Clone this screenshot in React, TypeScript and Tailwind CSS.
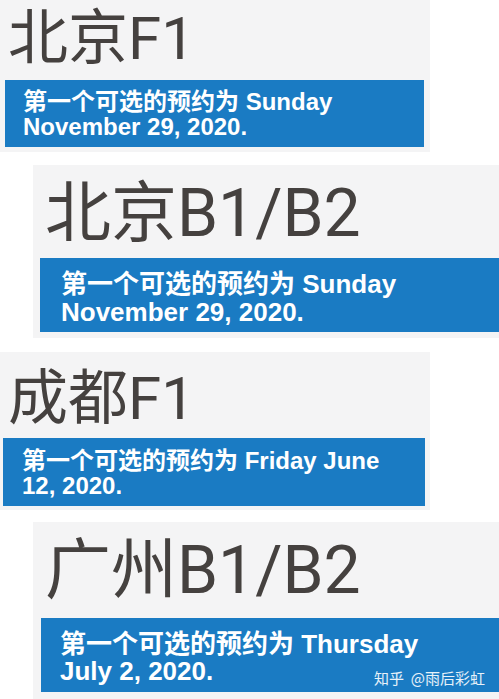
import React from 'react';

type Slot = {
    title: string;
    lines: [string, string];
    card: string;
    heading: string;
    banner: string;
};

// each screenshot crop is a bit off, so spacing lives per card
const slots: Slot[] = [
    {
        title: '北京F1',
        lines: ['第一个可选的预约为 Sunday', 'November 29, 2020.'],
        card: 'w-[430px] h-[152px] pt-[9px]',
        heading: 'ml-[8px] text-[60px]',
        banner: 'ml-[5px] w-[419px] mt-[11px] pl-[18px] pt-[9px] pb-[8px] text-[24px] leading-[25px]',
    },
    {
        title: '北京B1/B2',
        lines: ['第一个可选的预约为 Sunday', 'November 29, 2020.'],
        card: 'ml-[33px] mt-[13px] h-[173px] pt-[16px]',
        heading: 'ml-[12px] text-[66px]',
        banner: 'ml-[7px] mt-[11px] pl-[21px] pt-[12px] pb-[6px] text-[26px] leading-[28px]',
    },
    {
        title: '成都F1',
        lines: ['第一个可选的预约为 Friday June', '12, 2020.'],
        card: 'w-[430px] mt-[14px] h-[158px] pt-[17px]',
        heading: 'ml-[8px] text-[60px]',
        banner: 'ml-[3px] w-[422px] mt-[9px] pl-[19px] pt-[10px] pb-[8px] text-[24px] leading-[25px]',
    },
    {
        title: '广州B1/B2',
        lines: ['第一个可选的预约为 Thursday', 'July 2, 2020.'],
        card: 'ml-[33px] mt-[12px] h-[177px] pt-[16px]',
        heading: 'ml-[12px] text-[66px]',
        banner: 'ml-[8px] mt-[14px] pl-[19px] pt-[13px] pb-[7px] text-[26px] leading-[27px]',
    },
];

const App: React.FC = () => {
    return (
        <div className="w-[499px] h-[699px] bg-white overflow-hidden flex flex-col">
            {slots.map((s, i) => (
                <div key={s.title} className={`bg-[#f4f4f5] shrink-0 ${s.card}`}>
                    <h1 className={`font-[Roboto,'Noto_Sans_CJK_SC',sans-serif] leading-none font-normal text-[#45413f] ${s.heading}`}>
                        {s.title}
                    </h1>
                    <div className={`relative bg-[#1a7bc3] text-white font-bold font-['Liberation_Sans','Noto_Sans_CJK_SC',sans-serif] ${s.banner}`}>
                        <p>{s.lines[0]}</p>
                        <p>{s.lines[1]}</p>
                        {i === slots.length - 1 && (
                            <span className="absolute right-[14px] bottom-[7px] text-[15px] leading-none font-normal text-white/90 font-['Noto_Sans_CJK_SC',sans-serif] whitespace-pre">
                                知乎  @雨后彩虹
                            </span>
                        )}
                    </div>
                </div>
            ))}
        </div>
    );
};

export default App;
